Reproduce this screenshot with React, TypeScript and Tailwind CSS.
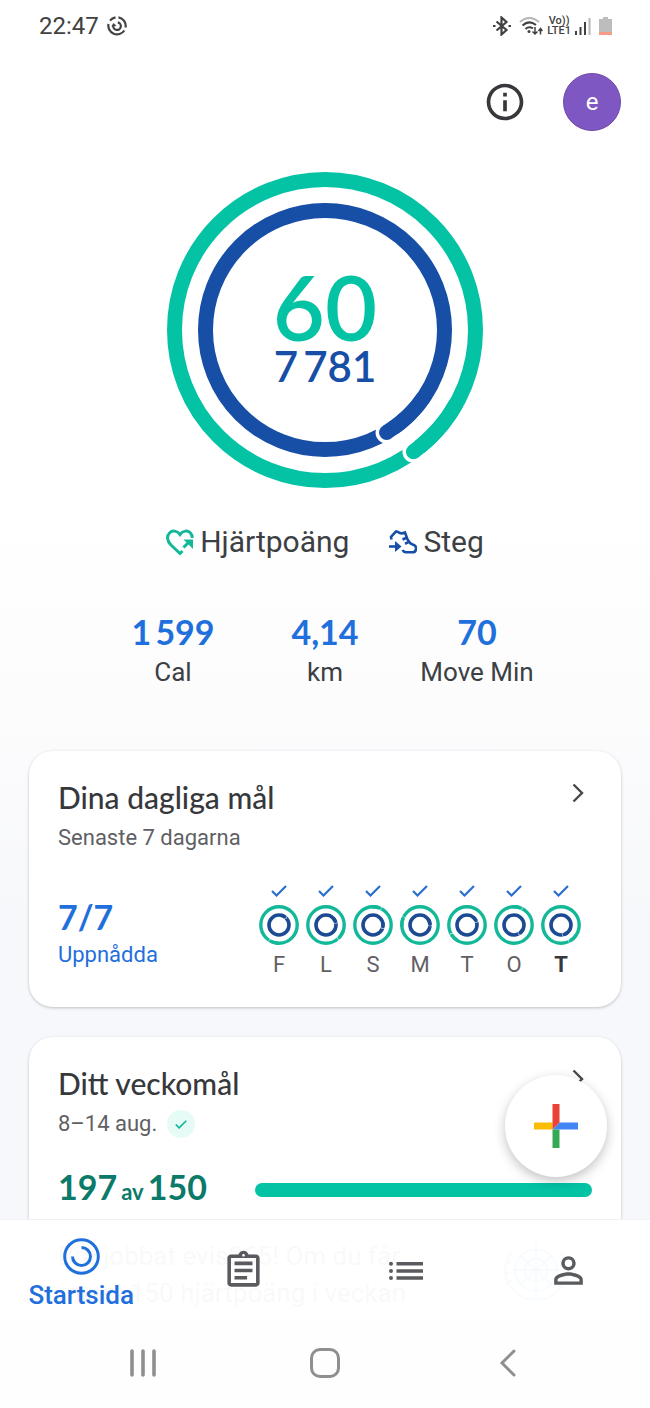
import { MdInfoOutline, MdOutlineAssignment, MdPersonOutline } from 'react-icons/md';

type RingProps = {
  center: number;
  radius: number;
  width: number;
  gap: number;
  angle: number;
  color: string;
};

type Day = {
  label: string;
  heart: number;
  steps: number;
  today?: boolean;
};

const days: Day[] = [
  { label: 'F', heart: 207, steps: 36 },
  { label: 'L', heart: 134, steps: 70 },
  { label: 'S', heart: 21, steps: 100 },
  { label: 'M', heart: 291, steps: 85 },
  { label: 'T', heart: 236, steps: 63 },
  { label: 'O', heart: 21, steps: 143 },
  { label: 'T', heart: 149, steps: 161, today: true },
];

// thin spaces as thousands separators
const stats = [
  { value: '1\u2009599', unit: 'Cal' },
  { value: '4,14', unit: 'km' },
  { value: '70', unit: 'Move Min' },
];

// A ring that has gone past 100 %: full circle, then the second lap with its round tip on top
const Ring = ({ center, radius, width, gap, angle, color }: RingProps) => {
  const rad = (angle * Math.PI) / 180;
  const back = ((angle - 25) * Math.PI) / 180;
  const x = center + radius * Math.sin(rad);
  const y = center - radius * Math.cos(rad);
  const x0 = center + radius * Math.sin(back);
  const y0 = center - radius * Math.cos(back);

  return (
    <g fill="none" stroke={color} strokeWidth={width}>
      <circle cx={center} cy={center} r={radius} />
      <circle cx={x} cy={y} r={width / 2 + gap} fill="#fff" stroke="none" />
      <path d={`M${x0} ${y0}A${radius} ${radius} 0 0 1 ${x} ${y}`} />
      <circle cx={x} cy={y} r={width / 2} fill={color} stroke="none" />
    </g>
  );
};

const Check = ({ className }: { className: string }) => (
  <svg className={className} viewBox="0 0 16 12" fill="none" stroke="currentColor" strokeWidth="2.2">
    <path d="M1 6l4.5 4.5L15 1" />
  </svg>
);

const Chevron = () => (
  <svg className="h-5 w-3" viewBox="0 0 12 20" fill="none" stroke="#47484b" strokeWidth="2.4">
    <path d="M1.5 1.5L10 10l-8.500 8.500" />
  </svg>
);

const StatusBar = () => (
  <div className="flex h-[52px] items-center justify-between pr-[38px] pl-[39px] text-[#414141]">
    <div className="flex items-center gap-2">
      <span className="text-2xl">22:47</span>
      <svg className="h-5 w-5" viewBox="0 0 20 20" fill="none" stroke="#414141" strokeWidth="2.2">
        <path d="M11.500 1.300A8.700 8.700 0 0 1 18.500 11.500M17.300 14.500A8.700 8.700 0 0 1 1.500 8M3 4.600A8.700 8.700 0 0 1 8.500 1.300" />
        <path d="M10.800 6.400A3.800 3.800 0 1 1 6.300 9.500" />
        <path d="M4.300 10.500l2.200-3.500 3 2.900z" fill="#414141" stroke="none" />
      </svg>
    </div>
    <div className="flex items-center gap-1">
      <svg className="h-5 w-[18px]" viewBox="0 0 18 20" fill="none" stroke="#414141" strokeWidth="2.2">
        <path d="M3.500 5.500l10 8.500-5 4.500V1.500l5 4.500-10 8.500" />
        <path d="M0 10h2.500M15.500 10H18" />
      </svg>
      <svg className="ml-1 h-5 w-6" viewBox="0 0 24 20" fill="none" stroke="#414141" strokeWidth="2">
        <path d="M1 6Q10-2 20 6" stroke="#b5b5b5" />
        <path d="M3.500 9.500Q10 3.500 17 9M6.500 13Q10 9.800 14 12.500" />
        <circle cx="10" cy="15.500" r="1.500" fill="#414141" stroke="none" />
        <path d="M16 11v7M13.500 15.500l2.500 2.500 2.500-2.500M21.500 18.500v-6M19.500 15l2-2.500 2 2.500" strokeWidth="1.500" />
      </svg>
      <div className="text-center text-[11px] leading-[10px] font-medium">
        Vo))
        <br />
        LTE1
      </div>
      <svg className="h-5 w-4" viewBox="0 0 16 20" fill="#414141">
        <path d="M0 15h2v4H0zM4.500 11h2v8h-2zM9 6h2v13H9z" />
        <path d="M13.500 2h2v17h-2z" fill="#b5b5b5" />
      </svg>
      <svg className="ml-1 h-5 w-[13px]" viewBox="0 0 13 20">
        <path d="M4 1h5v2h4v16H0V3h4z" fill="#bdbdbd" />
        <path d="M0 16h13v3H0z" fill="#f39b84" />
      </svg>
    </div>
  </div>
);

const TopBar = () => (
  <header className="flex items-center justify-end gap-9 pt-[21px] pr-[29px]">
    <button type="button" aria-label="Info">
      <MdInfoOutline className="size-11 text-[#37383b]" />
    </button>
    <button type="button" className="size-[58px] rounded-full border border-[#7049ad] bg-[#7e57c2] text-2xl leading-none text-white">
      e
    </button>
  </header>
);

const Summary = () => (
  <section className="flex flex-col items-center">
    <div className="mt-[41px] grid place-items-center">
      <svg className="col-start-1 row-start-1 size-[316px]" viewBox="0 0 316 316">
        <Ring center={158} radius={150.5} width={15} gap={3.5} angle={144} color="#04c3a5" />
        <Ring center={158} radius={119.5} width={15} gap={3.5} angle={149} color="#174ea6" />
      </svg>
      <div className="col-start-1 row-start-1 text-center font-['Lato'] font-semibold">
        <div className="text-[90px] leading-[72px] text-[#04c3a5]">60</div>
        <div className="text-[42px] leading-12 text-[#174ea6]">{'7\u2009781'}</div>
      </div>
    </div>

    <div className="mt-8 flex gap-10 text-3xl leading-11 text-[#3c4043]">
      <div className="flex items-center gap-1.5">
        <svg className="h-7 w-7" viewBox="0 0 28 28" fill="none" stroke="#12b898" strokeWidth="3">
          <path d="M16.500 23L14 25.500 5 17C1 13 .5 8 3.500 5c3-3 7.500-2.500 10.500 1.500C17 2.500 21.500 2 24.500 5q1.800 2 1.700 5" />
          <path d="M17.500 19.500l6-6" />
          <path d="M17.500 11.500H27V21z" fill="#12b898" stroke="none" />
        </svg>
        <span>Hjärtpoäng</span>
      </div>
      <div className="flex items-center gap-1.5">
        <svg className="h-7 w-7" viewBox="0 0 28 28" fill="none" stroke="#174ea6" strokeWidth="2.600">
          <path d="M2.500 11.500L2 9l5-5.500 2 .5q3 2.500 7 .5l2.500 7 3 4 4 1.800q2 1.500 1.500 4-.5 3-3.500 3H17q-2.500-.3-3.500-2.300" />
          <path d="M13.500 11.500l4-1.800M16 15.700l4-1.800" />
          <path d="M0 18.500h7" />
          <path d="M6 13l6.500 5.500L6 24z" fill="#174ea6" stroke="none" />
        </svg>
        <span>Steg</span>
      </div>
    </div>

    <dl className="mt-12 grid w-[456px] max-w-full grid-cols-3 text-center">
      {stats.map((stat) => (
        <div key={stat.unit} className="flex flex-col-reverse">
          <dt className="text-[26px] leading-10 text-[#3c4043]">{stat.unit}</dt>
          <dd className="font-['Lato'] text-[34px] leading-10 font-bold text-[#1f6fdc]">{stat.value}</dd>
        </div>
      ))}
    </dl>
  </section>
);

const DailyGoals = () => (
  <section className="rounded-3xl bg-white px-[29px] pt-6 pb-[26px] shadow-[0_1px_3px_rgba(60,64,67,0.3)]">
    <div className="flex items-start justify-between pr-2">
      <div>
        <h2 className="font-['Lato'] text-3xl leading-11 font-medium text-[#37383b]">Dina dagliga mål</h2>
        <p className="text-[22px] leading-[38px] text-[#5f6063]">Senaste 7 dagarna</p>
      </div>
      <button type="button" aria-label="Dina dagliga mål" className="pt-2">
        <Chevron />
      </button>
    </div>
    <div className="mt-7 flex items-center justify-between pr-[11px]">
      <div className="text-[#1f6fdc]">
        <div className="font-['Lato'] text-[34px] leading-11 font-bold">7/7</div>
        <div className="text-[22px] leading-8">Uppnådda</div>
      </div>
      <ul className="flex gap-[7px]">
        {days.map((day, i) => (
          <li key={i} className="flex flex-col items-center">
            <Check className="h-3 w-4 text-[#2a6fce]" />
            <svg className="mt-2 size-10" viewBox="0 0 40 40">
              <Ring center={20} radius={18.2} width={3.4} gap={0.4} angle={day.heart} color="#12b898" />
              <Ring center={20} radius={10} width={3.6} gap={0.4} angle={day.steps} color="#1c4a93" />
            </svg>
            <span className={day.today ? 'mt-1 text-[22px] leading-8 font-bold text-[#37383b]' : 'mt-1 text-[22px] leading-8 text-[#5f6063]'}>
              {day.label}
            </span>
          </li>
        ))}
      </ul>
    </div>
  </section>
);

const WeeklyGoal = () => (
  <section className="rounded-3xl bg-white px-[29px] pt-6 pb-7 shadow-[0_1px_3px_rgba(60,64,67,0.3)]">
    <div className="flex items-start justify-between pr-2">
      <div>
        <h2 className="font-['Lato'] text-3xl leading-11 font-medium text-[#37383b]">Ditt veckomål</h2>
        <p className="flex items-center gap-2.5 text-[22px] leading-[38px] text-[#5f6063]">
          8–14 aug.
          <span className="grid size-7 place-items-center rounded-full bg-[#e6faf6]">
            <Check className="h-[9px] w-3 text-[#12b898]" />
          </span>
        </p>
      </div>
      <button type="button" aria-label="Ditt veckomål" className="pt-2">
        <Chevron />
      </button>
    </div>
    <div className="mt-[22px] flex items-center justify-between gap-4">
      <div className="flex items-baseline gap-1 font-['Lato'] text-[34px] leading-11 font-bold whitespace-nowrap text-[#0b7a69]">
        197 <span className="text-[22px]">av</span> 150
      </div>
      <div className="h-3.5 w-[337px] shrink-0 rounded-full bg-[#04c3a5]" />
    </div>
    <div className="mt-6 flex items-start justify-between pr-5">
      <p className="text-[26px] leading-[37px] text-[#5f6063]">
        Bra jobbat evis365! Om du får
        <br />
        minst 150 hjärtpoäng i veckan
      </p>
      <svg className="h-[70px] w-[72px]" viewBox="0 0 76 70" fill="none" stroke="#3c9fd0" strokeWidth="2">
        <circle cx="38" cy="32" r="22" />
        <circle cx="38" cy="32" r="12" />
        <path d="M38 2v62M16 32h44M22 17l32 30M54 17L22 47" />
        <path d="M12 12Q-6 44 26 62h24Q82 44 64 12M6 22l6 4M3 34l7 1M6 46l7-3M70 22l-6 4M73 34l-7 1M70 46l-7-3" />
      </svg>
    </div>
  </section>
);

const BottomNav = () => (
  <nav className="grid h-[102px] grid-cols-4 border-t border-[#f0f1f3] bg-white/96 text-[#5a5b5e]">
    <a href="#start" className="flex flex-col items-center pt-[18px] text-[#1f6fdc]">
      <svg className="size-[37px]" viewBox="0 0 37 37" fill="none" stroke="currentColor" strokeWidth="3">
        <circle cx="18.500" cy="18.500" r="16.800" />
        <path d="M18.500 9.500A9 9 0 1 1 9.500 18.500" />
      </svg>
      <span className="text-[26px] leading-10 font-medium">Startsida</span>
    </a>
    <a href="#journal" aria-label="Journal" className="grid place-items-center">
      <MdOutlineAssignment className="size-[43px]" />
    </a>
    <a href="#browse" aria-label="Bläddra" className="grid place-items-center">
      <svg className="h-5 w-[34px]" viewBox="0 0 34 20" fill="currentColor">
        <circle cx="2" cy="2.700" r="2" />
        <circle cx="2" cy="10" r="2" />
        <circle cx="2" cy="17" r="2" />
        <path d="M7.500 1H34v3.400H7.500zM7.500 8.300H34v3.400H7.500zM7.500 15.300H34v3.400H7.500z" />
      </svg>
    </a>
    <a href="#profile" aria-label="Profil" className="grid place-items-center">
      <MdPersonOutline className="size-[43px]" />
    </a>
  </nav>
);

const SystemNav = () => (
  <div className="grid h-[87px] grid-cols-3 place-items-center bg-[#fefefe] px-[52px] pb-1 text-[#8f8f8f]">
    <button type="button" aria-label="Senaste">
      <svg className="h-7 w-[26px]" viewBox="0 0 26 28" stroke="currentColor" strokeWidth="3.600" strokeLinecap="round">
        <path d="M2 2v24M13 2v24M24 2v24" />
      </svg>
    </button>
    <button type="button" aria-label="Hem">
      <svg className="size-[30px]" viewBox="0 0 30 30" fill="none" stroke="currentColor" strokeWidth="3">
        <rect x="1.500" y="1.500" width="27" height="27" rx="8.500" />
      </svg>
    </button>
    <button type="button" aria-label="Tillbaka">
      <svg className="h-7 w-[17px]" viewBox="0 0 17 28" fill="none" stroke="currentColor" strokeWidth="3" strokeLinecap="round">
        <path d="M15 2L3 14l12 12" />
      </svg>
    </button>
  </div>
);

const App = () => {
  return (
    <div className="relative h-screen overflow-hidden bg-[linear-gradient(to_bottom,#ffffff_36%,#fcfcfd_50%,#f7f8fb_66%)] font-['Roboto',sans-serif]">
      <StatusBar />
      <TopBar />
      <main>
        <Summary />
        <div className="mt-[59px] flex flex-col gap-[30px] px-[29px]">
          <DailyGoals />
          <WeeklyGoal />
        </div>
      </main>

      <div className="absolute inset-x-0 bottom-0">
        <BottomNav />
        <SystemNav />
      </div>
      <button
        type="button"
        aria-label="Lägg till"
        className="absolute right-[43px] bottom-[231px] grid size-[102px] place-items-center rounded-full bg-white shadow-[0_4px_12px_rgba(0,0,0,0.24)]"
      >
        <svg className="size-11" viewBox="0 0 44 44">
          <path d="M0 18.500h18.500v7H0z" fill="#fbbc04" />
          <path d="M18.500 25.500h7V44h-7z" fill="#34a853" />
          <path d="M25.500 18.500H44v7H18.500z" fill="#4285f4" />
          <path d="M18.500 0h7v18.500l-7 7z" fill="#ea4335" />
        </svg>
      </button>
    </div>
  );
};

export default App;
